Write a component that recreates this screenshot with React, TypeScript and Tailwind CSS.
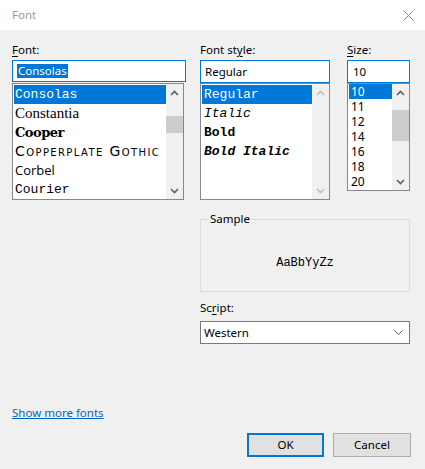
import React from "react";

const ui = "font-['Noto_Sans',sans-serif]";
const mono = "font-['Liberation_Mono',monospace]";

function Up({ disabled }: { disabled?: boolean }) {
  return (
    <svg width="9" height="6" viewBox="0 0 9 6">
      <path d="M1 5 L4.5 1.5 L8 5" fill="none" stroke={disabled ? "#bfbfbf" : "#606060"} strokeWidth="1.6" />
    </svg>
  );
}
function Down({ disabled }: { disabled?: boolean }) {
  return (
    <svg width="9" height="6" viewBox="0 0 9 6">
      <path d="M1 1 L4.5 4.5 L8 1" fill="none" stroke={disabled ? "#bfbfbf" : "#606060"} strokeWidth="1.6" />
    </svg>
  );
}

function ScrollBar({ thumbTop, thumbH, disabled }: { thumbTop?: number; thumbH?: number; disabled?: boolean }) {
  return (
    <div className="w-[17px] h-full bg-[#f0f0f0] flex flex-col justify-between relative shrink-0">
      <div className="h-[17px] flex items-center justify-center">
        <Up disabled={disabled} />
      </div>
      {thumbH ? (
        <div className="absolute left-0 w-[17px] bg-[#cdcdcd]" style={{ top: thumbTop, height: thumbH }} />
      ) : null}
      <div className="h-[17px] flex items-center justify-center">
        <Down disabled={disabled} />
      </div>
    </div>
  );
}

function Label({ pre, u, post }: { pre: string; u: string; post: string }) {
  return (
    <div className="text-[11.5px] leading-[16px] text-black whitespace-nowrap">
      {pre}
      <span className="underline underline-offset-2">{u}</span>
      {post}
    </div>
  );
}

export default function App() {
  const fonts: { name: string; cls: string }[] = [
    { name: "Consolas", cls: `${mono} text-[13px]` },
    { name: "Constantia", cls: "font-['Liberation_Serif',serif] text-[15px]" },
    { name: "Cooper", cls: "font-['DejaVu_Serif',serif] font-black text-[13px] tracking-[-0.5px]" },
    { name: "Copperplate Gothic", cls: "font-['DejaVu_Sans',sans-serif] text-[14px] tracking-[1.4px] [font-variant:small-caps]" },
    { name: "Corbel", cls: "font-['Open_Sans',sans-serif] text-[13px]" },
    { name: "Courier", cls: `${mono} text-[13px]` },
  ];
  const styles: { name: string; cls: string }[] = [
    { name: "Regular", cls: "" },
    { name: "Italic", cls: "italic" },
    { name: "Bold", cls: "font-bold" },
    { name: "Bold Italic", cls: "font-bold italic" },
  ];
  const sizes = ["10", "11", "12", "14", "16", "18", "20"];

  return (
    <div className={`w-[425px] h-[469px] bg-[#f0f0f0] flex flex-col ${ui} text-black`}>
      <div className="h-[30px] bg-white flex items-center justify-between pl-[12px] pr-[11px] shrink-0">
        <span className="text-[11.5px] text-[#999999]">Font</span>
        <svg width="11" height="11" viewBox="0 0 11 11">
          <path d="M0.5 0.5 L10.5 10.5 M10.5 0.5 L0.5 10.5" stroke="#8a8a8a" strokeWidth="1" />
        </svg>
      </div>

      <div className="flex pl-[12px] pt-[12px]">
        {/* Font column */}
        <div className="w-[174px] flex flex-col">
          <Label pre="" u="F" post="ont:" />
          <div className="mt-[2px] h-[22px] border border-[#0078d7] bg-white flex items-center pl-[4px]">
            <span className="bg-[#0078d7] text-white text-[11.5px] leading-[14px] px-[1px]">Consolas</span>
          </div>
          <div className="mt-[1px] w-[172px] h-[117px] border border-[#828790] bg-white flex p-[1px] pr-0 overflow-hidden">
            <div className="flex-1 flex flex-col overflow-hidden">
              {fonts.map((f, i) => (
                <div
                  key={f.name}
                  className={`h-[19px] leading-[19px] shrink-0 flex items-center pl-[1px] whitespace-nowrap overflow-hidden ${f.cls} ${i === 0 ? "bg-[#0078d7] text-white" : "text-black"}`}
                >
                  {f.name}
                </div>
              ))}
            </div>
            <div className="-mt-[1px] h-[115px]">
              <ScrollBar thumbTop={32} thumbH={17} />
            </div>
          </div>
        </div>

        {/* Right area */}
        <div className="ml-[14px] w-[210px] flex flex-col">
          <div className="flex">
            <div className="w-[130px] flex flex-col">
              <Label pre="Font st" u="y" post="le:" />
              <div className="mt-[2px] h-[23px] border border-[#0078d7] bg-white flex items-center pl-[4px] text-[11.5px]">
                Regular
              </div>
              <div className="h-[117px] border border-[#828790] bg-white flex p-[1px] pr-0 overflow-hidden">
                <div className="flex-1 flex flex-col overflow-hidden">
                  {styles.map((s, i) => (
                    <div
                      key={s.name}
                      className={`h-[19px] leading-[19px] shrink-0 flex items-center pl-[2px] whitespace-nowrap ${mono} text-[13px] ${s.cls} ${i === 0 ? "bg-[#0078d7] text-white" : "text-black"}`}
                    >
                      {s.name}
                    </div>
                  ))}
                </div>
                <div className="-mt-[1px] h-[115px]">
                  <ScrollBar disabled />
                </div>
              </div>
            </div>
            <div className="ml-[17px] w-[63px] flex flex-col">
              <Label pre="" u="S" post="ize:" />
              <div className="mt-[2px] h-[23px] border border-[#0078d7] bg-white flex items-center pl-[5px] text-[11.5px]">
                10
              </div>
              <div className="h-[108px] border border-[#828790] bg-white flex pl-[1px] overflow-hidden">
                <div className="flex-1 flex flex-col overflow-hidden">
                  {sizes.map((s, i) => (
                    <div
                      key={s}
                      className={`h-[15px] shrink-0 flex items-center pl-[2px] ${i === 0 ? "bg-[#0078d7] text-white" : "text-black"}`}
                    >
                      <span className="text-[12px] leading-[12px]">{s}</span>
                    </div>
                  ))}
                </div>
                <div className="h-[106px]">
                  <ScrollBar thumbTop={26} thumbH={31} />
                </div>
              </div>
            </div>
          </div>

          <div className="relative mt-[19px] h-[73px] border border-[#dcdcdc] flex items-center justify-center pt-[14px]">
            <span className="absolute left-[8px] top-[-9px] bg-[#f0f0f0] px-[1px] text-[11.5px] leading-[16px]">Sample</span>
            <span className={`${mono} text-[12px]`}>AaBbYyZz</span>
          </div>

          <div className="mt-[8px]">
            <Label pre="Sc" u="r" post="ipt:" />
          </div>
          <div className="mt-[5px] h-[23px] border border-[#7a7a7a] bg-white flex items-center justify-between pl-[3px] pr-[6px] text-[11.5px]">
            <span>Western</span>
            <svg width="9" height="5" viewBox="0 0 9 5">
              <path d="M0.5 0.5 L4.5 4.5 L8.5 0.5" fill="none" stroke="#555555" strokeWidth="1" />
            </svg>
          </div>
        </div>
      </div>

      <div className="pl-[12px] mt-[59px] h-[16px] leading-[16px]">
        <span className="text-[11.5px] text-[#0066cc] underline">Show more fonts</span>
      </div>

      <div className="flex justify-end pr-[14px] mt-[14px] gap-[9px]">
        <button className="w-[77px] h-[24px] border-2 border-[#0078d7] bg-[#e1e1e1] text-[11.5px]">OK</button>
        <button className="w-[78px] h-[24px] border border-[#adadad] bg-[#e1e1e1] text-[11.5px]">Cancel</button>
      </div>
    </div>
  );
}
